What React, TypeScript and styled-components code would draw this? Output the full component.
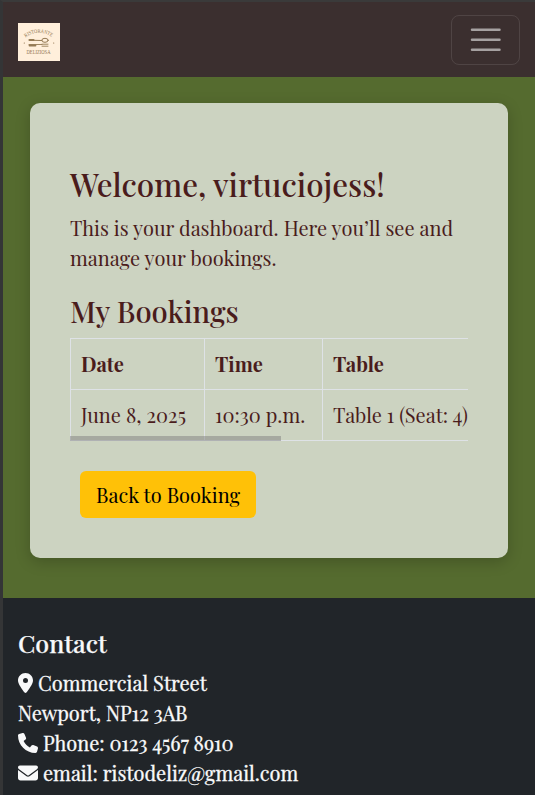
import React from "react";
import styled, { createGlobalStyle } from "styled-components";
import { FaEnvelope, FaLocationDot, FaPhone } from "react-icons/fa6";

const GlobalStyle = createGlobalStyle`
  *, *::before, *::after { box-sizing: border-box; }
  html { background: #343536; }
  body {
    margin: 0;
    overflow: hidden;
    font-family: "Playfair Display", "Liberation Serif", serif;
    font-size: 20px;
    line-height: 30px;
    color: #4a1c1c;
  }
  h1, h2, h3, p { margin: 0; font-weight: 500; line-height: 1.2; }
`;

const Page = styled.div`
  display: flex;
  flex-direction: column;
  height: 795px;
  border-left: 3px solid #343536;
  border-top: 2px solid #3a3a3a;
`;

const Navbar = styled.header`
  display: flex;
  flex: none;
  align-items: center;
  justify-content: space-between;
  height: 75px;
  padding: 0 15px;
  background: #3b2f2f;
`;

const Logo = styled.svg`
  display: block;
  width: 42px;
  height: 38px;
  margin-top: 5px;
  background: #ffefdb;
`;

const Toggler = styled.button`
  display: grid;
  place-items: center;
  width: 69px;
  height: 50px;
  padding: 0;
  margin-top: 1px;
  border: 1px solid rgba(255, 255, 255, 0.1);
  border-radius: 8px;
  background: transparent;
`;

const Main = styled.main`
  flex: none;
  height: 521px;
  padding: 26px 27px 40px;
  background: #556b2f;
`;

const Card = styled.section`
  height: 455px;
  padding: 63px 40px 40px;
  border-radius: 10px;
  background: #ccd3c1;
  box-shadow: 0 4px 15px rgba(0, 0, 0, 0.2);
`;

const Title = styled.h1`
  margin-bottom: 9px;
  font-size: 31.3px;
  white-space: nowrap;
`;

const Intro = styled.p`
  font-weight: 400;
  line-height: 30px;
`;

const Subtitle = styled.h2`
  height: 35px;
  margin: 20px 0 10.4px;
  font-size: 29.2px;
`;

const TableScroller = styled.div`
  position: relative;
  height: 103px;
  overflow: hidden;
`;

const ScrollThumb = styled.div`
  position: absolute;
  left: 0;
  bottom: 0;
  width: 211px;
  height: 5px;
  background: rgba(128, 128, 128, 0.5);
`;

const Table = styled.table`
  width: 752px;
  table-layout: fixed;
  border-collapse: collapse;
`;

const Col = styled.col<{ $width: number }>`
  width: ${(p) => p.$width}px;
`;

const HeadCell = styled.th`
  height: 51px;
  padding: 0 10px;
  border: 1px solid #dee2e6;
  text-align: left;
`;

const Cell = styled.td`
  height: 51px;
  padding: 0 10px;
  border: 1px solid #dee2e6;
  white-space: nowrap;
`;

const BookingButton = styled.button`
  display: block;
  width: 176px;
  height: 47px;
  margin: 30px 0 0 10px;
  padding: 2px 0 0;
  border: 0;
  border-radius: 6px;
  background: #ffc107;
  color: #000;
  font: inherit;
  white-space: nowrap;
`;

const Footer = styled.footer`
  flex: 1;
  padding: 30px 15px 0;
  background: #212529;
  color: #f8f9fa;
`;

const FooterTitle = styled.h3`
  margin-bottom: 10px;
  font-size: 25px;
  -webkit-text-stroke: 0.25px currentColor;
`;

const ContactLine = styled.div`
  display: flex;
  align-items: center;
  gap: 5px;
  height: 30px;
  white-space: nowrap;
  -webkit-text-stroke: 0.3px currentColor;
`;

const IconBox = styled.span<{ $width: number }>`
  display: flex;
  flex: none;
  justify-content: center;
  width: ${(p) => p.$width}px;
`;

function RestaurantLogo() {
  return (
    <Logo viewBox="0 0 42 38">
      <path id="logo-arc" d="M7.5 14.5 Q21 5 34.5 14.5" fill="none" />
      <g fill="#8f754f" fontFamily="Liberation Serif, serif" fontSize="5.4">
        <text textLength="28" lengthAdjust="spacingAndGlyphs">
          <textPath href="#logo-arc">RISTORANTE</textPath>
        </text>
        <text x="8.5" y="31.2" textLength="24" lengthAdjust="spacingAndGlyphs">
          DELIZIOSA
        </text>
      </g>
      <g fill="none" stroke="#947a54" strokeLinecap="round">
        <path d="M11.5 17h4" strokeWidth="2.2" />
        <path d="M14 17.2l10 .3" strokeWidth="1.1" />
        <ellipse cx="27" cy="17.3" rx="3.2" ry="2" strokeWidth="1" />
        <path d="M11 21.5h13M24 21.2h6M24 23.2h6" strokeWidth=".9" />
        <path d="M11.5 22.5h6" strokeWidth="1.8" />
      </g>
      <circle cx="6.3" cy="20" r=".6" fill="#876b43" />
      <circle cx="35.7" cy="20" r=".6" fill="#876b43" />
    </Logo>
  );
}

export default function App() {
  return (
    <>
      <GlobalStyle />
      <Page>
        <Navbar>
          <RestaurantLogo />
          <Toggler aria-label="Toggle navigation">
            <svg width="37.5" height="37.5" viewBox="0 0 30 30">
              <path
                d="M4 7h22M4 15h22M4 23h22"
                stroke="#fff"
                strokeOpacity=".55"
                strokeWidth="2"
                strokeLinecap="round"
              />
            </svg>
          </Toggler>
        </Navbar>
        <Main>
          <Card>
            <Title>Welcome, virtuciojess!</Title>
            <Intro>This is your dashboard. Here you’ll see and manage your bookings.</Intro>
            <Subtitle>My Bookings</Subtitle>
            <TableScroller>
              <Table>
                <colgroup>
                  <Col $width={134} />
                  <Col $width={118} />
                  <Col $width={500} />
                </colgroup>
                <thead>
                  <tr>
                    <HeadCell>Date</HeadCell>
                    <HeadCell>Time</HeadCell>
                    <HeadCell>Table</HeadCell>
                  </tr>
                </thead>
                <tbody>
                  <tr>
                    <Cell>June 8, 2025</Cell>
                    <Cell>10:30 p.m.</Cell>
                    <Cell>Table 1 (Seat: 4)</Cell>
                  </tr>
                </tbody>
              </Table>
              <ScrollThumb />
            </TableScroller>
            <BookingButton>Back to Booking</BookingButton>
          </Card>
        </Main>
        <Footer>
          <FooterTitle>Contact</FooterTitle>
          <ContactLine>
            <IconBox $width={15}>
              <FaLocationDot size={20} />
            </IconBox>
            <span>Commercial Street</span>
          </ContactLine>
          <ContactLine>
            <span>Newport, NP12 3AB</span>
          </ContactLine>
          <ContactLine>
            <IconBox $width={20}>
              <FaPhone size={20} />
            </IconBox>
            <span>Phone: 0123 4567 8910</span>
          </ContactLine>
          <ContactLine>
            <IconBox $width={20}>
              <FaEnvelope size={20} />
            </IconBox>
            <span>email: ristodeliz@gmail.com</span>
          </ContactLine>
        </Footer>
      </Page>
    </>
  );
}
